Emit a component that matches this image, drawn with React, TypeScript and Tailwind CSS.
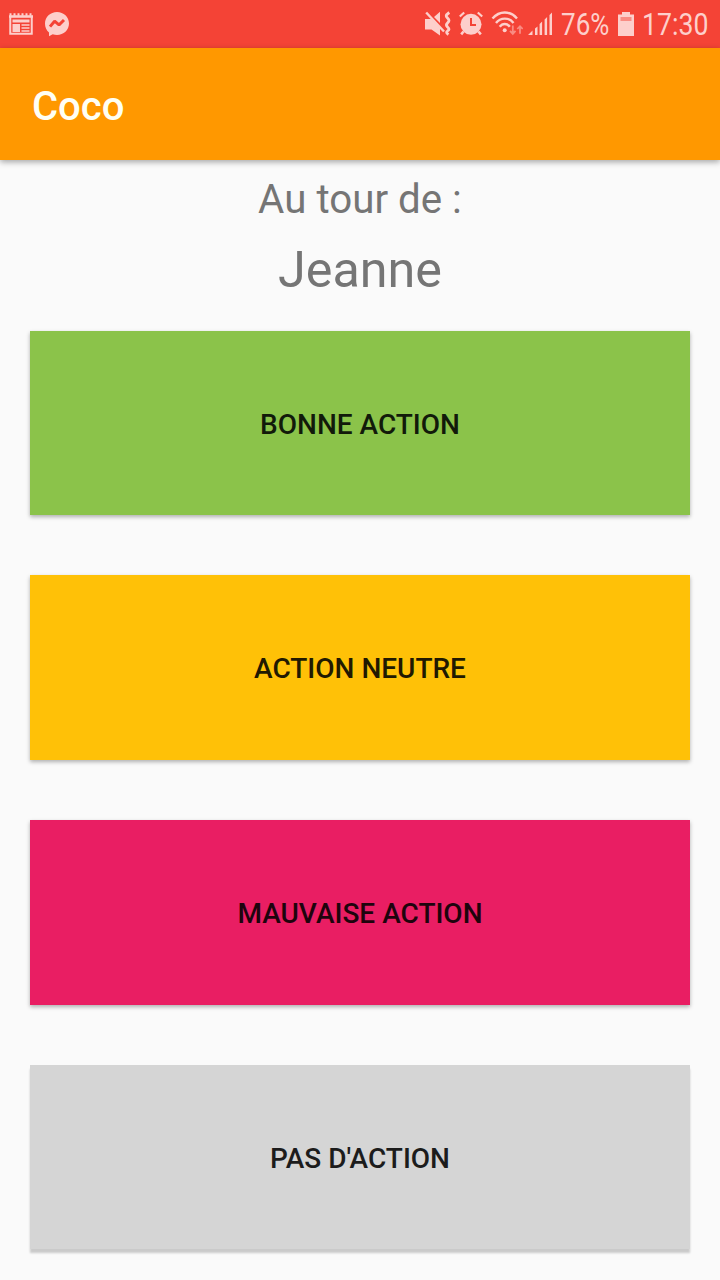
import React from "react";

function NewsIcon() {
  return (
    <svg viewBox="0 0 24 24" className="h-6 w-6" fill="none" stroke="#fdcfcb">
      <path d="M1.25 4V21.75H22.75V4" strokeWidth="2" />
      <path d="M0 4.5H24" strokeWidth="2.6" />
      <path d="M0.5 2.5H24" strokeWidth="2.5" strokeDasharray="2 2" />
      <path d="M3.5 9H20.5" strokeWidth="3" />
      <path d="M3.5 12H11V20H3.5Z" fill="#fdcfcb" stroke="none" />
      <path d="M12.5 13H20.5M12.5 16H20.5M12.5 19H20.5" strokeWidth="1.6" />
    </svg>
  );
}

function MessengerIcon() {
  return (
    <svg viewBox="0 0 24 26" className="h-[26px] w-6">
      <path d="M12 1C5.3 1 0 6 0 12.5C0 16.2 1.4 19.3 4 21.5V25.2L7.7 23.2C9 23.7 10.5 24 12 24C18.7 24 24 19 24 12.5C24 6 18.7 1 12 1Z" fill="#fdcfcb" />
      <path d="M5 15.6L9.6 10.2L14 13.8L19 9" fill="none" stroke="#f44336" strokeWidth="3" strokeLinejoin="bevel" />
    </svg>
  );
}

function MuteVibrateIcon() {
  return (
    <svg viewBox="0 0 26 26" className="h-[26px] w-[26px] shrink-0" fill="none">
      <path d="M0 8H6.5L15 16.5V24.5L6.5 18.5H0Z" fill="#fdcfcb" />
      <path d="M9 6L15 0.8V12Z" fill="#fdcfcb" />
      <path d="M1.2 1.5L19 20.5" stroke="#fdcfcb" strokeWidth="2.5" />
      <path d="M24.3 1.5C20 4.5 21 5.5 22.5 7C24.5 9 24.5 10 22.5 12C21 13.5 21 14.5 22.5 16C24.5 18 24.5 18.5 22.5 20C21 21.3 21.3 22 23.5 23.5" stroke="#fdcfcb" strokeWidth="2.8" />
    </svg>
  );
}

function AlarmIcon() {
  return (
    <svg viewBox="0 0 24 26" className="ml-2 h-[26px] w-6 shrink-0" fill="none" stroke="#fdcfcb">
      <circle cx="12" cy="13.3" r="10.5" fill="#fdcfcb" stroke="none" />
      <path d="M0.8 5.5L5.2 1.5M18.8 1.5L23.2 5.5" strokeWidth="2.2" />
      <path d="M4.5 20.5L2.2 23.3M19.5 20.5L21.8 23.3" strokeWidth="2.6" />
      <path d="M12 7V14H17" stroke="#f44336" strokeWidth="2" />
    </svg>
  );
}

function WifiIcon() {
  return (
    <svg viewBox="0 0 32 26" className="ml-2 h-[26px] w-8 shrink-0" fill="none" stroke="#fdcfcb">
      <path d="M1.5 7.5C8.5-.5 19-.5 26 7.5M5 12C9.5 6.2 18 6.2 22.5 12M8.7 15.8C11.5 12 16 12 18.8 15.8" strokeWidth="2.4" />
      <circle cx="13.7" cy="19.2" r="2" fill="#fdcfcb" stroke="none" />
      <path d="M21.8 14.5V22.5M19 19.8L21.8 22.8L24.5 19.8M29 22.8V15.3M26.3 18L29 15.2L31.7 18" stroke="#f98c83" strokeWidth="1.8" />
    </svg>
  );
}

function SignalIcon() {
  return (
    <svg viewBox="0 0 25 26" className="ml-[5px] h-[26px] w-[25px] shrink-0" fill="#fdcfcb">
      <path d="M0 24L4.5 19.5V24ZM7 17.5L9.5 15.5V24H7ZM11.6 13L14.1 10.5V24H11.6ZM16.6 8.5L19.1 6V24H16.6ZM21.5 4L24 1.5V24H21.5Z" />
    </svg>
  );
}

function BatteryIcon() {
  return (
    <svg viewBox="0 0 16 24" className="h-6 w-4 shrink-0">
      <path d="M0 2.5H4V0H12V2.5H16V24H0Z" fill="#fdcfcb" />
      <path d="M2.5 5H13.5V9H2.5Z" fill="#f98c83" />
    </svg>
  );
}

const raised = "shadow-[0_2px_4px_rgba(0,0,0,0.3)]";

const actions = [
  { label: "BONNE ACTION", style: "h-[184px] bg-[#8bc34a]", text: "text-[#121a0a]", shadow: raised },
  { label: "ACTION NEUTRE", style: "h-[185px] bg-[#ffc107]", text: "text-[#211901]", shadow: raised },
  { label: "MAUVAISE ACTION", style: "h-[185px] bg-[#e91e63]", text: "text-[#1e040d]", shadow: raised },
  { label: "PAS D'ACTION", style: "h-[184px] bg-[#d5d5d5]", text: "text-[#1c1c1c]", shadow: "shadow-[0_4px_2px_#cacaca]" },
];

export default function App() {
  return (
    <div className="flex h-[1280px] w-[720px] flex-col overflow-hidden bg-[#fafafa] font-['Roboto',sans-serif]">
      <div className="flex h-12 shrink-0 items-center bg-[#f44336] pl-[9px] text-[#fdcfcb]">
        <div className="flex flex-1 items-center gap-3">
          <NewsIcon />
          <MessengerIcon />
        </div>
        <div className="flex w-[295px] items-center">
          <MuteVibrateIcon />
          <AlarmIcon />
          <WifiIcon />
          <SignalIcon />
          <span className="ml-2 w-[49px] whitespace-nowrap pt-[2px] text-[31px] leading-[46px]"><span className="inline-block origin-left scale-x-[0.84]">76%</span></span>
          <span className="ml-2"><BatteryIcon /></span>
          <span className="ml-2 w-[66px] whitespace-nowrap pt-[2px] text-[31px] leading-[46px]"><span className="inline-block origin-left scale-x-[0.86]">17:30</span></span>
        </div>
      </div>
      <header className="z-10 flex h-28 shrink-0 items-center bg-[#ff9800] pl-8 pt-[6px] shadow-[0_2px_6px_rgba(0,0,0,0.35)]">
        <h1 className="text-[40px] font-medium leading-none text-[#fffff4]">Coco</h1>
      </header>
      <main className="flex flex-1 flex-col items-center px-[30px] text-[#757575]">
        <p className="mt-4 text-[40.3px] leading-[48px]">Au tour de :</p>
        <p className="mt-4 text-[50.3px] leading-[59px]">Jeanne</p>
        <div className="mt-8 flex w-full flex-col gap-[60px]">
          {actions.map((action) => (
            <button key={action.label} className={`flex w-full items-center justify-center pt-[3px] text-[28px] font-medium leading-none ${action.style} ${action.text} ${action.shadow}`}>
              {action.label}
            </button>
          ))}
        </div>
      </main>
    </div>
  );
}
